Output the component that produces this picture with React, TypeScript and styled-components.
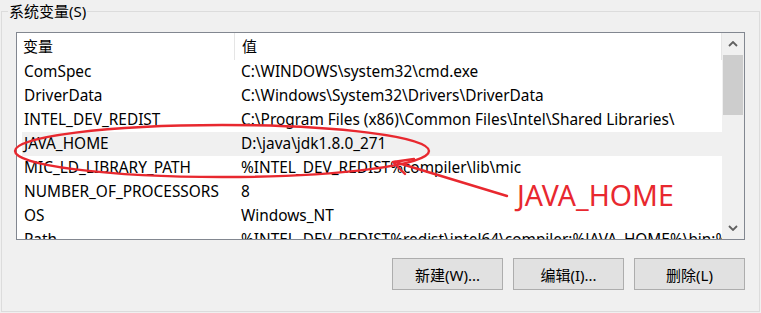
import React from 'react';
import styled, { createGlobalStyle } from 'styled-components';

const GlobalStyle = createGlobalStyle`
  html, body {
    margin: 0;
    padding: 0;
    background: #f0f0f0;
  }
  body {
    font-family: "Noto Sans", "Noto Sans CJK SC", sans-serif;
    color: #000;
  }
`;

const Page = styled.div`
  position: relative;
  width: 761px;
  height: 313px;
  overflow: hidden;
`;

const GroupBox = styled.fieldset`
  margin: 0 0 0 1px;
  padding: 0;
  width: 759px;
  box-sizing: border-box;
  border: 1px solid #dcdcdc;
  min-inline-size: 0;
`;

const Legend = styled.legend`
  margin-left: 6px;
  padding: 0 1px;
  font-size: 15px;
  line-height: 22px;
`;

const GroupBody = styled.div`
  padding: 10px 14px 21px;
  display: flex;
  flex-direction: column;
`;

const ListBox = styled.div`
  height: 208px;
  box-sizing: border-box;
  border: 1px solid #828790;
  background: #fff;
  display: flex;
`;

const ListMain = styled.div`
  flex: 1;
  min-width: 0;
  display: flex;
  flex-direction: column;
  overflow: hidden;
`;

const Header = styled.div`
  height: 27px;
  flex: none;
  display: flex;
`;

const HeaderCell = styled.div<{ $width: number; $pad: number }>`
  width: ${(p) => p.$width}px;
  flex: none;
  box-sizing: border-box;
  padding-left: ${(p) => p.$pad}px;
  border-right: 1px solid #e5e5e5;
  font-size: 15px;
  line-height: 27px;
`;

const Rows = styled.div`
  flex: 1;
  overflow: hidden;
`;

const Row = styled.div<{ $active?: boolean }>`
  height: 24px;
  margin-left: 5px;
  display: flex;
  background: ${(p) => (p.$active ? '#f0f0f0' : 'transparent')};
  font-size: 15.4px;
  line-height: 24px;
  white-space: nowrap;
`;

const NameCell = styled.div`
  width: 212px;
  flex: none;
  box-sizing: border-box;
  padding-left: 2px;
  overflow: hidden;
`;

const ValueCell = styled.div`
  flex: 1;
  min-width: 0;
  padding-left: 7px;
  overflow: hidden;
`;

const ScrollBar = styled.div`
  width: 22px;
  flex: none;
  background: #f0f0f0;
  display: flex;
  flex-direction: column;
`;

const ScrollButton = styled.div`
  height: 22px;
  flex: none;
  display: flex;
  align-items: center;
  justify-content: center;
`;

const Thumb = styled.div`
  height: 60px;
  flex: none;
  margin: 0 1px;
  background: #cdcdcd;
`;

const Track = styled.div`
  flex: 1;
`;

const ButtonRow = styled.div`
  margin-top: 18px;
  display: flex;
  justify-content: flex-end;
  gap: 10px;
`;

const Button = styled.button`
  width: 111px;
  height: 32px;
  box-sizing: border-box;
  border: 1px solid #adadad;
  background: #e1e1e1;
  font-family: inherit;
  font-size: 15px;
  color: #000;
  padding: 0;
`;

const Annotation = styled.svg`
  position: absolute;
  left: 0;
  top: 0;
  pointer-events: none;
`;

const AnnotationLabel = styled.span`
  position: absolute;
  left: 517px;
  top: 181px;
  font-size: 28.5px;
  line-height: 28px;
  color: #e8282f;
  white-space: nowrap;
`;

const rows: [string, string][] = [
  ['ComSpec', 'C:\\WINDOWS\\system32\\cmd.exe'],
  ['DriverData', 'C:\\Windows\\System32\\Drivers\\DriverData'],
  ['INTEL_DEV_REDIST', 'C:\\Program Files (x86)\\Common Files\\Intel\\Shared Libraries\\'],
  ['JAVA_HOME', 'D:\\java\\jdk1.8.0_271'],
  ['MIC_LD_LIBRARY_PATH', '%INTEL_DEV_REDIST%compiler\\lib\\mic'],
  ['NUMBER_OF_PROCESSORS', '8'],
  ['OS', 'Windows_NT'],
  ['Path', '%INTEL_DEV_REDIST%redist\\intel64\\compiler;%JAVA_HOME%\\bin;%SystemRoot%\\system32'],
];

const Chevron: React.FC<{ down?: boolean }> = ({ down }) => (
  <svg width="10" height="6" viewBox="0 0 10 6">
    <path
      d={down ? 'M1 1 L5 5 L9 1' : 'M1 5 L5 1 L9 5'}
      fill="none"
      stroke="#606060"
      strokeWidth="1.8"
    />
  </svg>
);

export default function App() {
  return (
    <>
      <GlobalStyle />
      <Page>
        <GroupBox>
          <Legend>系统变量(S)</Legend>
          <GroupBody>
            <ListBox>
              <ListMain>
                <Header>
                  <HeaderCell $width={218} $pad={6}>变量</HeaderCell>
                  <HeaderCell $width={487} $pad={7}>值</HeaderCell>
                </Header>
                <Rows>
                  {rows.map(([name, value]) => (
                    <Row key={name} $active={name === 'JAVA_HOME'}>
                      <NameCell>{name}</NameCell>
                      <ValueCell>{value}</ValueCell>
                    </Row>
                  ))}
                </Rows>
              </ListMain>
              <ScrollBar>
                <ScrollButton>
                  <Chevron />
                </ScrollButton>
                <Thumb />
                <Track />
                <ScrollButton>
                  <Chevron down />
                </ScrollButton>
              </ScrollBar>
            </ListBox>
            <ButtonRow>
              <Button>新建(W)...</Button>
              <Button>编辑(I)...</Button>
              <Button>删除(L)</Button>
            </ButtonRow>
          </GroupBody>
        </GroupBox>

        <Annotation width="761" height="313" viewBox="0 0 761 313">
          <g fill="none" stroke="#e8282f" strokeWidth="2.4" strokeLinecap="round" strokeLinejoin="round">
            <ellipse cx="222" cy="151" rx="207" ry="26" />
            <path d="M507 196 L395 162" />
            <path d="M393 162 L414 159 M393 162 L405 174" />
          </g>
        </Annotation>
        <AnnotationLabel>JAVA_HOME</AnnotationLabel>
      </Page>
    </>
  );
}
